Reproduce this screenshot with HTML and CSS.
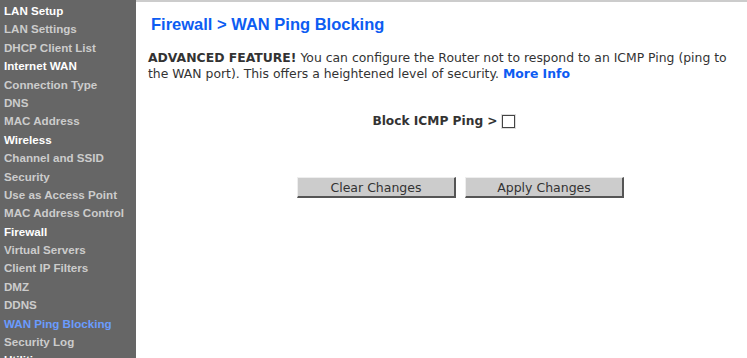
FILE: index.html
```html
<!DOCTYPE html>
<html>
<head>
<meta charset="utf-8">
<link rel="stylesheet" href="styles.css">
</head>
<body>
<div class="page">
  <nav class="side">
    <div class="head">LAN Setup</div>
    <div class="item">LAN Settings</div>
    <div class="item">DHCP Client List</div>
    <div class="head">Internet WAN</div>
    <div class="item">Connection Type</div>
    <div class="item">DNS</div>
    <div class="item">MAC Address</div>
    <div class="head">Wireless</div>
    <div class="item">Channel and SSID</div>
    <div class="item">Security</div>
    <div class="item">Use as Access Point</div>
    <div class="item">MAC Address Control</div>
    <div class="head">Firewall</div>
    <div class="item">Virtual Servers</div>
    <div class="item">Client IP Filters</div>
    <div class="item">DMZ</div>
    <div class="item">DDNS</div>
    <div class="item active">WAN Ping Blocking</div>
    <div class="item">Security Log</div>
    <div class="head">Utilities</div>
  </nav>
  <main class="main">
    <h1 class="title">Firewall &gt; WAN Ping Blocking</h1>
    <p class="desc"><b>ADVANCED FEATURE!</b> You can configure the Router not to respond to an ICMP Ping (ping to the WAN port). This offers a heightened level of security. <a class="more">More Info</a></p>
    <div class="opt"><b>Block ICMP Ping &gt;</b><span class="check"></span></div>
    <div class="btns">
      <button class="btn">Clear Changes</button>
      <button class="btn">Apply Changes</button>
    </div>
  </main>
</div>
</body>
</html>
```
FILE: styles.css
```css
html, body {
  margin: 0;
  padding: 0;
  background: #fff;
}
body {
  width: 747px;
  height: 358px;
  overflow: hidden;
}
.page {
  display: flex;
  height: 358px;
}
.side {
  width: 136px;
  flex: none;
  background: #666666;
  font-family: "Liberation Sans", Arial, sans-serif;
  font-weight: bold;
  font-size: 11.6px;
  padding-top: 3px;
  box-sizing: border-box;
  overflow: hidden;
}
.side div {
  height: 18.4px;
  line-height: 16px;
  padding-left: 4px;
  white-space: nowrap;
}
.head { color: #ffffff; }
.item { color: #cccccc; }
.item.active { color: #6a9cff; }
.main {
  flex: 1;
  border-top: 2px solid #cccccc;
  font-family: "DejaVu Sans", Verdana, sans-serif;
  color: #333333;
  font-size: 12px;
}
.title {
  margin: 12px 0 0 15px;
  font-family: "Liberation Sans", Arial, sans-serif;
  font-size: 16.5px;
  font-weight: bold;
  color: #0d5cf2;
  line-height: 20px;
}
.desc {
  margin: 16px 0 0 12px;
  line-height: 16px;
  font-size: 12.4px;
}
.more {
  color: #0d5cf2;
  font-weight: bold;
}
.opt {
  margin-top: 32px;
  display: flex;
  justify-content: center;
  align-items: center;
  gap: 4px;
  font-size: 12.2px;
  padding-left: 4px;
}
.check {
  display: inline-block;
  width: 11px;
  height: 11px;
  border: 1px solid #444;
  box-shadow: 0 0 0 1px #ddd;
  background: #fff;
}
.btns {
  margin-top: 49px;
  display: flex;
  justify-content: center;
  gap: 9px;
  padding-left: 38px;
}
.btn {
  width: 159px;
  height: 21px;
  padding: 0;
  background: #cccccc;
  border: 2px solid;
  border-color: #eeeeee #555555 #555555 #eeeeee;
  border-width: 1px 2px 2px 1px;
  font-family: "DejaVu Sans", Verdana, sans-serif;
  font-size: 12.5px;
  color: #333333;
}
```
